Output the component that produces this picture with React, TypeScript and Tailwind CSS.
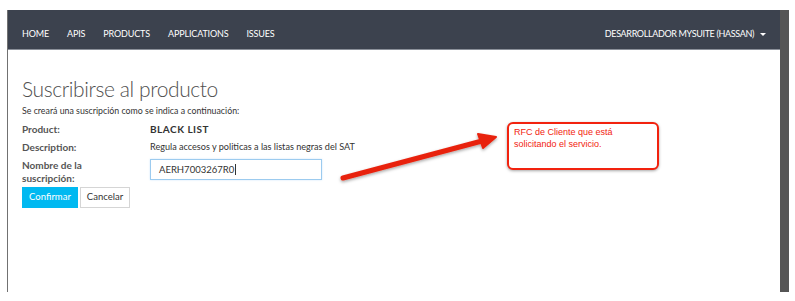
import type { JSX } from 'react';

const navItems = ['HOME', 'APIS', 'PRODUCTS', 'APPLICATIONS', 'ISSUES'];

const CalloutArrow = (): JSX.Element => (
  <svg
    className="pointer-events-none absolute left-0 top-0"
    width="795"
    height="301"
    viewBox="0 0 795 301"
  >
    <defs>
      <filter id="sh" x="-10%" y="-50%" width="120%" height="200%">
        <feDropShadow dx="0" dy="1.5" stdDeviation="1.5" floodColor="#000" floodOpacity="0.35" />
      </filter>
    </defs>
    <g filter="url(#sh)">
      <path d="M343 178 L482 141" stroke="#e8230f" strokeWidth="5" strokeLinecap="round" />
      <path d="M496 137 L478 134 L483 148 Z" fill="#e8230f" stroke="#e8230f" strokeWidth="2" strokeLinejoin="round" />
    </g>
  </svg>
);

export default function App(): JSX.Element {
  return (
    <div
      className="relative h-[301px] w-[795px] overflow-hidden bg-white"
      style={{ fontFamily: 'Lato, "Open Sans", sans-serif' }}
    >
      <div className="ml-[7px] mt-[10px] flex h-[282px] w-[782px]">
        <div className="flex flex-1 flex-col border-l border-[#717171]">
          <nav className="flex h-[40px] items-center justify-between border-b border-[#8b9099] bg-[#3c424e] pl-[14px] pr-[14px] pt-[9px] text-[9px] tracking-[-0.15px] text-white">
            <div className="flex items-center gap-[18px]">
              {navItems.map((item) => (
                <span key={item}>{item}</span>
              ))}
            </div>
            <div className="flex items-center gap-[6px]">
              <span className="tracking-[-0.35px]">DESARROLLADOR MYSUITE (HASSAN)</span>
              <span className="h-0 w-0 border-x-[3px] border-t-[3px] border-x-transparent border-t-white" />
            </div>
          </nav>
          <div className="px-[14px] pt-[27px] text-[#4a4a4a]">
            <h1 className="text-[21px] font-light leading-[24px] tracking-[-0.4px] text-[#505050]">
              Suscribirse al producto
            </h1>
            <p className="mt-[4px] text-[8.8px] leading-[12px] text-[#333]">
              Se creará una suscripción como se indica a continuación:
            </p>
            <div className="mt-[6px] grid grid-cols-[128px_auto] gap-y-[6px] text-[10px] leading-[12px]">
              <span className="font-bold text-[#555]">Product:</span>
              <span className="font-bold tracking-[0.5px] text-[#333]">BLACK LIST</span>
              <span className="font-bold text-[#555]">Description:</span>
              <span className="text-[9.1px] text-[#333]">Regula accesos y politicas a las listas negras del SAT</span>
              <span className="font-bold leading-[13px] text-[#555]">
                Nombre de la
                <br />
                suscripción:
              </span>
              <div className="flex h-[21px] w-[172px] items-center border border-[#9ccbef] px-[8px] text-[9.5px] text-[#333] shadow-[0_0_2px_#cfe6fa]">
                AERH7003267R0
                <span className="ml-[1px] h-[11px] w-px bg-[#333]" />
              </div>
            </div>
            <div className="mt-[2px] flex gap-[2px] text-[9.5px]">
              <button className="h-[21px] w-[56px] bg-[#00b9f1] text-white">Confirmar</button>
              <button className="h-[21px] w-[50px] border border-[#d5d5d5] bg-white text-[#333]">
                Cancelar
              </button>
            </div>
          </div>
        </div>
        <div className="w-[9px] bg-[#555555]" />
      </div>

      <div
        className="absolute left-[507px] top-[122px] h-[48px] w-[152px] rounded-[6px] border-2 border-[#f2220e] bg-white px-[5px] pt-[2px] text-[9px] leading-[12px] text-[#f2220e] shadow-[0_1px_3px_rgba(0,0,0,0.35)]"
        style={{ fontFamily: '"Liberation Sans", Arial, sans-serif' }}
      >
        RFC de Cliente que está
        <br />
        solicitando el servicio.
      </div>
      <CalloutArrow />
    </div>
  );
}
